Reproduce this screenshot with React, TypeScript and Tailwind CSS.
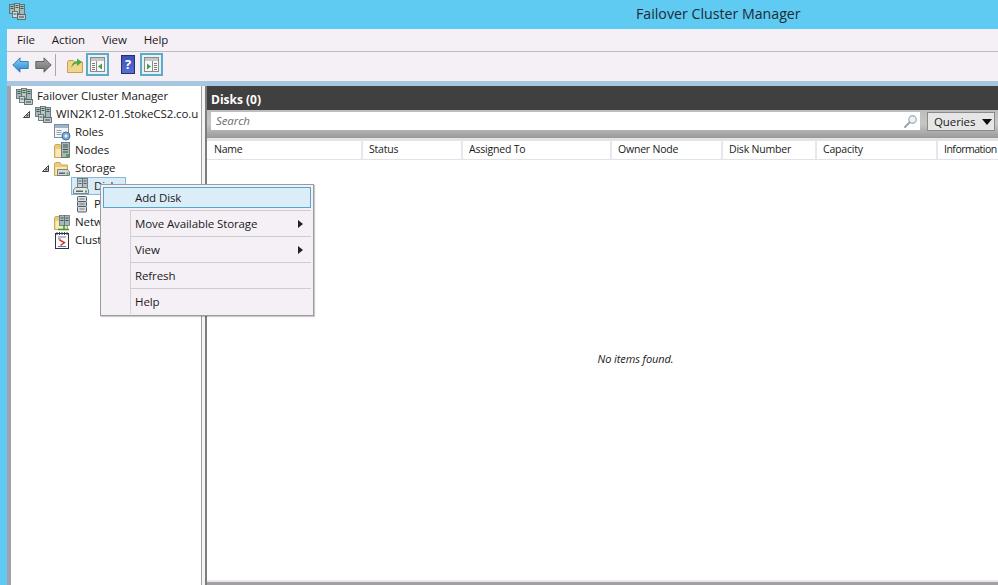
const font = { fontFamily: '"Open Sans", "Liberation Sans", sans-serif' }

// server rack icon, used for the app icon and the two top tree nodes
const ClusterIcon = ({ className = '' }: { className?: string }) => (
  <svg className={className} width="17" height="17" viewBox="0 0 17 17">
    <rect x="0.5" y="1.5" width="5" height="9" fill="#a5b8bc" stroke="#55656a" strokeWidth="0.8" />
    <rect x="5.5" y="0.5" width="5" height="10" fill="#b9c9b8" stroke="#55656a" strokeWidth="0.8" />
    <rect x="10.5" y="1.5" width="5" height="10" fill="#a5b8bc" stroke="#55656a" strokeWidth="0.8" />
    <path d="M1.5 3.5h3M1.5 5.5h3M6.5 2.5h3M6.5 4.5h3M11.5 3.5h3M11.5 5.5h3" stroke="#3f5a48" />
    <rect x="3.5" y="8.5" width="5" height="6" fill="#d5dcde" stroke="#55656a" strokeWidth="0.8" />
    <rect x="8.5" y="11.5" width="8" height="5" fill="#c0c8cb" stroke="#4d5a5f" strokeWidth="0.8" />
    <path d="M10 14h5M4.5 11h3" stroke="#3f4b4f" />
  </svg>
)

const RolesIcon = () => (
  <svg width="17" height="17" viewBox="0 0 17 17">
    <rect x="0.5" y="0.5" width="14" height="13" fill="#f4f7fa" stroke="#7f8c96" />
    <rect x="1" y="1" width="13" height="3" fill="#9db4cc" />
    <path d="M2.5 6.5h5M2.5 8.5h5M2.5 10.5h5" stroke="#93a1ad" />
    <circle cx="12" cy="12" r="4" fill="#7eabd8" stroke="#3f6d9f" />
    <circle cx="12" cy="12" r="1.4" fill="#eef5fb" />
  </svg>
)

const FolderIcon = ({ children }: { children?: React.ReactNode }) => (
  <svg width="17" height="17" viewBox="0 0 17 17">
    <path d="M0.5 3.5V15.5h13V5H7.5L6 2.5H1.5z" fill="#eccb78" stroke="#b9984a" strokeWidth="0.8" />
    <path d="M1.5 7h11v8h-11z" fill="#f8e8b6" />
    {children}
  </svg>
)

const NodesIcon = () => (
  <FolderIcon>
    <rect x="7.5" y="0.5" width="8" height="15" fill="#a7b8bc" stroke="#56656a" strokeWidth="0.8" />
    <path d="M9 3h5M9 5h5M9 7.5h5M9 10h5" stroke="#44584d" />
    <rect x="12" y="12" width="3" height="3" fill="#58a83f" />
  </FolderIcon>
)

const StorageIcon = () => (
  <FolderIcon>
    <path d="M3.5 9.5h10l2 2.5v3.5h-12z" fill="#d3d8da" stroke="#5d6b70" strokeWidth="0.8" />
    <rect x="5" y="12.5" width="6" height="1.5" fill="#59666b" />
    <rect x="12.5" y="12.5" width="2" height="2" fill="#58a83f" />
  </FolderIcon>
)

const DisksIcon = () => (
  <svg width="17" height="17" viewBox="0 0 17 17">
    <rect x="4.5" y="0.5" width="5" height="9" fill="#c6cfd2" stroke="#5d6b70" strokeWidth="0.8" />
    <rect x="9.5" y="0.5" width="5" height="9" fill="#b4c0c4" stroke="#5d6b70" strokeWidth="0.8" />
    <path d="M5.5 3h3M5.5 5.5h3M10.5 3h3M10.5 5.5h3" stroke="#4f5f64" />
    <path d="M2.5 9.5h11l2 2.5v3.5h-15v-3.5z" fill="#e6e9ea" stroke="#5d6b70" strokeWidth="0.8" />
    <rect x="3" y="12.5" width="7" height="1.5" fill="#59666b" />
    <rect x="12" y="12.5" width="2" height="2" fill="#58a83f" />
  </svg>
)

const PoolsIcon = () => (
  <svg width="17" height="17" viewBox="0 0 17 17">
    <rect x="4.5" y="0.5" width="9" height="5" rx="1" fill="#dcdfe0" stroke="#4f5b60" />
    <rect x="4.5" y="5.5" width="9" height="5" rx="1" fill="#c3c9cc" stroke="#4f5b60" />
    <rect x="4.5" y="10.5" width="9" height="5.5" rx="1" fill="#dcdfe0" stroke="#4f5b60" />
    <path d="M6.5 3h5M6.5 8h5M6.5 13h5" stroke="#6f7a7e" />
  </svg>
)

const NetworksIcon = () => (
  <FolderIcon>
    <rect x="5.5" y="1.5" width="5" height="10" fill="#a7b8bc" stroke="#56656a" strokeWidth="0.7" />
    <rect x="10.5" y="1.5" width="5" height="10" fill="#a7b8bc" stroke="#56656a" strokeWidth="0.7" />
    <path d="M6.5 4h3M6.5 6.5h3M11.5 4h3M11.5 6.5h3" stroke="#44584d" />
    <path d="M4 15.5h11M10 11v4" stroke="#2f9a3f" strokeWidth="1.5" />
  </FolderIcon>
)

const EventsIcon = () => (
  <svg width="17" height="17" viewBox="0 0 17 17">
    <rect x="1.5" y="1.5" width="13" height="15" fill="#fbfbfb" stroke="#33333b" />
    <path d="M3 0v3M5.5 0v3M8 0v3M10.5 0v3M13 0v3" stroke="#33333b" strokeWidth="0.9" />
    <path d="M4 5h8M4 7h3" stroke="#7f6fa8" />
    <path d="M5.5 8l5 2.5-4 3" fill="none" stroke="#c0392b" strokeWidth="1.4" />
    <path d="M4 14.5h8" stroke="#5577bb" />
  </svg>
)

const ArrowIcon = ({ top, bottom, edge, id, flip }: { top: string; bottom: string; edge: string; id: string; flip?: boolean }) => (
  <svg width="17" height="16" viewBox="0 0 17 16" className={flip ? 'scale-x-[-1]' : ''}>
    <defs>
      <linearGradient id={id} x1="0" y1="0" x2="0" y2="1">
        <stop offset="0" stopColor={top} />
        <stop offset="1" stopColor={bottom} />
      </linearGradient>
    </defs>
    <path d="M0.8 8L8 0.8v3.7h8.2v7H8v3.7z" fill={`url(#${id})`} stroke={edge} strokeWidth="0.9" />
  </svg>
)

const PaneIcon = ({ side }: { side: 'left' | 'right' }) => (
  <div className="w-[23px] h-[23px] border-2 border-[#62a9c6] bg-[#e3f1f8] flex items-center justify-center">
    <svg width="15" height="15" viewBox="0 0 15 15">
      <rect x="0.5" y="0.5" width="14" height="14" fill="#f7f7f7" stroke="#8b8b8b" />
      <rect x="1" y="1" width="13" height="3" fill="#c6c6c6" />
      {side === 'left' ? (
        <>
          <path d="M2 6.5h3M2 8.5h3M2 10.5h3M2 12.5h3" stroke="#7d7d7d" />
          <path d="M6.5 4v10" stroke="#8b8b8b" />
          <path d="M12 6.5v6l-4-3z" fill="#3f9f4f" />
        </>
      ) : (
        <>
          <path d="M10 6.5h3M10 8.5h3M10 10.5h3M10 12.5h3" stroke="#7d7d7d" />
          <path d="M8.5 4v10" stroke="#8b8b8b" />
          <path d="M3 6.5v6l4-3z" fill="#3f9f4f" />
        </>
      )}
    </svg>
  </div>
)

const Expander = () => (
  <svg width="7" height="7" viewBox="0 0 7 7">
    <path d="M6.5 0.5v6h-6z" fill="#fff" stroke="#3f3f3f" />
    <path d="M5.5 2.5v3h-3z" fill="#3f3f3f" />
  </svg>
)

const tree = [
  { label: 'Failover Cluster Manager', icon: <ClusterIcon />, indent: 'pl-[4px]' },
  { label: 'WIN2K12-01.StokeCS2.co.u', icon: <ClusterIcon />, indent: 'pl-[12px]', open: true },
  { label: 'Roles', icon: <RolesIcon />, indent: 'pl-[42px]' },
  { label: 'Nodes', icon: <NodesIcon />, indent: 'pl-[42px]' },
  { label: 'Storage', icon: <StorageIcon />, indent: 'pl-[31px]', open: true },
  { label: 'Disks', icon: <DisksIcon />, indent: 'pl-[60px]', selected: true },
  { label: 'Pools', icon: <PoolsIcon />, indent: 'pl-[61px]' },
  { label: 'Networks', icon: <NetworksIcon />, indent: 'pl-[42px]' },
  { label: 'Cluster Events', icon: <EventsIcon />, indent: 'pl-[42px]' },
]

const columns = [
  { label: 'Name', width: 'w-[156px]' },
  { label: 'Status', width: 'w-[100px]' },
  { label: 'Assigned To', width: 'w-[149px]' },
  { label: 'Owner Node', width: 'w-[111px]' },
  { label: 'Disk Number', width: 'w-[94px]' },
  { label: 'Capacity', width: 'w-[121px]' },
  { label: 'Information', width: 'w-[60px]' },
]

const menuItems = [
  { label: 'Move Available Storage', arrow: true },
  { label: 'View', arrow: true },
  { label: 'Refresh' },
  { label: 'Help' },
]

export default function App() {
  return (
    <div style={font} className="relative w-[998px] h-[585px] overflow-hidden bg-[#5fcbf3] text-[11.5px] tracking-[-0.1px] text-[#1a1a1a] flex flex-col">
      {/* Title bar */}
      <div className="h-[29px] shrink-0 flex items-center pl-[9px]">
        <ClusterIcon className="mb-[6px]" />
        <span className="ml-[610px] mb-[1px] text-[14.2px] tracking-normal text-[#1c2a33]">Failover Cluster Manager</span>
      </div>

      <div className="flex-1 ml-[7px] flex flex-col min-h-0">
        {/* Menu */}
        <div className="h-[23px] shrink-0 bg-[#f5f0f6] border-b border-[#bdbabd] flex items-center pl-[10px] gap-[17px]">
          <span>File</span>
          <span>Action</span>
          <span>View</span>
          <span>Help</span>
        </div>

        {/* Toolbar */}
        <div className="h-[29px] shrink-0 bg-[#f5f0f6] flex items-start pt-[1px] pl-[5px]">
          <div className="mt-[4px]"><ArrowIcon id="back" top="#8fd0f5" bottom="#1f86d0" edge="#2a77ad" /></div>
          <div className="mt-[4px] ml-[6px]"><ArrowIcon id="forward" top="#a8a8a8" bottom="#6f6f6f" edge="#5a5a5a" flip /></div>
          <div className="w-px h-[22px] bg-[#a8a8a8] ml-[3px] mt-[1px]" />
          <div className="ml-[11px] mt-[3px] w-[19px]">
            <svg width="16" height="17" viewBox="0 0 16 17">
              <path d="M0.5 6v10.5h15V6H8L6.5 4.5H1.5z" fill="#f0d688" stroke="#b2943f" strokeWidth="0.8" />
              <path d="M4.5 12c0-4 2-6.5 5.5-6.5V2.5L15 6l-5 4V7.5C7.5 7.5 5.5 9 4.5 12z" fill="#4fa83f" />
            </svg>
          </div>
          <PaneIcon side="left" />
          <div className="ml-[12px] mt-[2px] w-[14px] h-[19px] bg-gradient-to-b from-[#3c50b8] to-[#5a6fd0] border border-[#20307f] flex items-center justify-center text-white font-bold text-[13px] leading-none">?</div>
          <div className="ml-[5px]"><PaneIcon side="right" /></div>
        </div>

        <div className="h-[5px] shrink-0 bg-[#a9c6e0]" />

        <div className="flex-1 min-h-0 flex bg-[#f4f4f4]">
          <div className="w-[4px] shrink-0 bg-[#a3a0a8]" />

          {/* Tree */}
          <div className="w-[191px] shrink-0 bg-white border-r border-[#a0a0a0] pt-[1px] overflow-hidden">
            {tree.map((item) => (
              <div key={item.label} className={`h-[18px] flex items-center whitespace-nowrap ${item.indent}`}>
                {item.open && <span className="w-[7px] mr-[4px] flex"><Expander /></span>}
                <span className={`flex items-center h-[18px] pl-[1px] pr-[3px] gap-[2px] ${item.selected ? 'bg-[#d9ebf7] border border-[#88b6d6]' : ''}`}>
                  {item.icon}
                  <span className="ml-[2px]">{item.label}</span>
                </span>
              </div>
            ))}
          </div>

          {/* Splitter */}
          <div className="w-[5px] shrink-0 border-r-2 border-[#7d7d7d] bg-[#f4f4f4]" />

          {/* Content */}
          <div className="flex-1 min-w-0 flex flex-col bg-white">
            <div className="h-[24px] shrink-0 bg-[#404040] text-white font-bold text-[12px] tracking-normal flex items-center pl-[4px] pt-[3px]">Disks (0)</div>
            <div className="h-[28px] shrink-0 bg-gradient-to-b from-[#bdbdbd] via-[#c6c6c6] to-[#9a9a9a] flex items-start pt-[2px] pl-[4px]">
              <div className="w-[709px] h-[18px] bg-white flex items-center justify-between pl-[5px] pr-[2px] italic text-[#6d6d6d]">
                Search
                <svg width="15" height="15" viewBox="0 0 15 15">
                  <circle cx="9.5" cy="5.5" r="3.7" fill="#eef3f6" stroke="#a8b4ba" strokeWidth="1.4" />
                  <path d="M6.5 8.5L2 13" stroke="#9aa5aa" strokeWidth="2" strokeLinecap="round" />
                </svg>
              </div>
              <div className="ml-[7px] w-[68px] h-[19px] bg-[#e6e6e6] border border-[#8a8a8a] flex items-center pl-[6px] gap-[7px]">
                Queries
                <svg width="10" height="6" viewBox="0 0 10 6"><path d="M0 0h10L5 6z" fill="#111111" /></svg>
              </div>
            </div>
            <div className="h-[3px] shrink-0 bg-[#e4e4e4]" />
            <div className="h-[19px] shrink-0 flex border-b border-[#dfe3ea] whitespace-nowrap overflow-hidden text-[10.5px] tracking-[-0.2px]">
              {columns.map((col) => (
                <div key={col.label} className={`${col.width} shrink-0 border-r-2 border-[#e6e8ee] last:border-r-0 last:tracking-[-0.5px] pl-[6px] first:pl-[7px] flex items-center`}>{col.label}</div>
              ))}
            </div>
            <div className="flex-1 flex items-center justify-center italic text-[11px] pb-[22px] pl-[66px]">No items found.</div>
            <div className="h-[2px] shrink-0 bg-[#e8e8e8]" />
            <div className="h-[3px] shrink-0 bg-[#a2a0a2]" />
          </div>
        </div>
      </div>

      {/* Context menu */}
      <div className="absolute left-[100px] top-[184px] w-[214px] h-[132px] bg-[#f5f0f6] border border-[#9b9b9b] shadow-[1px_1px_1px_rgba(0,0,0,0.2)] px-[2px] pt-[2px] flex flex-col">
        <div className="h-[21px] shrink-0 bg-[#dcedfa] border border-[#53a6cc] flex items-center pl-[31px] mb-[2px]">Add Disk</div>
        <div className="absolute left-[29px] top-[25px] bottom-[1px] w-px bg-[#d4d0d4]" />
        {menuItems.map((item) => (
          <div key={item.label} className="h-[26px] shrink-0 ml-[28px] border-t border-[#cfcbcf] flex items-center justify-between pl-[4px] pr-[8px] pt-[1px]">
            <span>{item.label}</span>
            {item.arrow && (
              <svg width="5" height="8" viewBox="0 0 5 8"><path d="M0 0l5 4-5 4z" fill="#222222" /></svg>
            )}
          </div>
        ))}
      </div>
    </div>
  )
}
